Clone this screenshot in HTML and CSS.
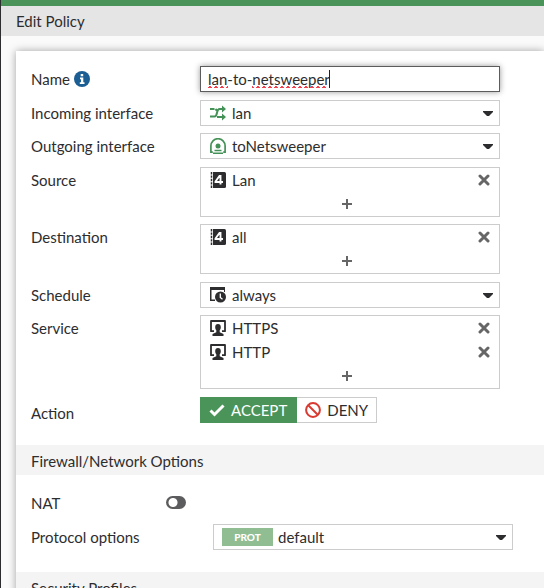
FILE: index.html
```html
<!DOCTYPE html>
<html lang="en">
<head>
<meta charset="utf-8">
<title>Edit Policy</title>
<link rel="stylesheet" href="styles.css">
</head>
<body>
<svg class="sprite" aria-hidden="true">
  <defs>
    <pattern id="squiggle" width="6" height="3" patternUnits="userSpaceOnUse">
      <path d="M0 2h4v1H0zM1 1h2v1H1z" fill="#f0424f"/>
    </pattern>
    <symbol id="i-address" viewBox="0 0 16 16">
      <path d="M3 0h11.500a1.500 1.500 0 0 1 1.500 1.500v13a1.500 1.500 0 0 1-1.500 1.500H3z" fill="#2d2d2f"/>
      <path d="M1.500 0v16" stroke="#2d2d2f" stroke-width="1.500" stroke-dasharray="2.400 1"/>
      <path d="M10.500 12.500V4h-1L5.500 9.500v.5H13" fill="none" stroke="#fff" stroke-width="1.900"/>
    </symbol>
    <symbol id="i-service" viewBox="0 0 16 16">
      <path d="M4 11.200H1V1h14v10.200h-3" fill="none" stroke="#2d2d2f" stroke-width="1.800" stroke-linejoin="round"/>
      <path d="M5.200 7.300C5.200 5 6.200 4 8 4s2.800 1 2.800 3.300c0 1.400-.5 2.400-1.100 3V12.300l3.800 1.700v2h-11v-2l3.800-1.700v-2c-.6-.6-1.100-1.600-1.100-3z" fill="#2d2d2f"/>
    </symbol>
    <symbol id="i-remove" viewBox="0 0 12 12">
      <path d="M2 2l8 8M10 2l-8 8" stroke="#666" stroke-width="3" stroke-linecap="round"/>
    </symbol>
    <symbol id="i-add" viewBox="0 0 12 12">
      <path d="M6 1v10M1 6h10" stroke="#666" stroke-width="2"/>
    </symbol>
    <symbol id="i-caret" viewBox="0 0 10 6">
      <path d="M0 0h10v1L6 5H4L0 1z" fill="#2d2d2f"/>
    </symbol>
  </defs>
</svg>
<header class="topbar"><h1>Edit Policy</h1></header>
<main class="content">
  <form class="card">
    <section class="fields">
      <div class="group">
        <div class="row">
          <label class="label" for="name">Name
            <svg class="icon info" viewBox="0 0 16 16" aria-hidden="true"><circle cx="8" cy="8" r="8" fill="#1b5e93"/><path d="M6.700 3h2.500v2.200H6.700zM6 6.500h3.300v4.700H10.500V13H5.800v-1.800H7V8.200H6z" fill="#fff"/></svg>
          </label>
          <div class="control">
            <input class="box name" id="name" type="text" value="lan-to-netsweeper" spellcheck="false" autocomplete="off">
            <svg class="marks" width="124" height="20" aria-hidden="true"><path d="M0 15h20v3H0zM44 15h76v3H44z" fill="url(#squiggle)"/><path d="M121 0h1v18h-1z" fill="#222"/></svg>
          </div>
        </div>
      </div>
      <div class="group">
        <div class="row">
          <label class="label" for="incoming">Incoming interface</label>
          <div class="control">
            <select class="box" id="incoming"><option>lan</option></select>
            <svg class="icon lead" viewBox="0 0 16 16" aria-hidden="true"><path d="M0 4h4.500M7 12h6M0 11.500h4.500c3.500 0 1.500-7.500 5-7.500H13M5.500 4l1.300 1.500M7 12l1.500 0" fill="none" stroke="#459258" stroke-width="2"/><path d="M12 .5L16 4l-4 3.500zM12 8.500l4 3.500-4 3.500z" fill="#459258"/></svg>
            <svg class="caret" aria-hidden="true"><use href="#i-caret"/></svg>
          </div>
        </div>
        <div class="row">
          <label class="label" for="outgoing">Outgoing interface</label>
          <div class="control">
            <select class="box" id="outgoing"><option>toNetsweeper</option></select>
            <svg class="icon lead" viewBox="0 0 16 16" aria-hidden="true"><path d="M2.800 14.200H.9V7.800a7.100 7.100 0 0 1 14.200 0v6.400h-1.900" fill="none" stroke="#459258" stroke-width="1.700"/><circle cx="8" cy="8" r="2.500" fill="#459258"/><path d="M4.500 12.500h7M3 15.300h10" stroke="#459258" stroke-width="1.400"/></svg>
            <svg class="caret" aria-hidden="true"><use href="#i-caret"/></svg>
          </div>
        </div>
      </div>
      <div class="group">
        <div class="row">
          <span class="label" id="source">Source</span>
          <div class="control list" role="group" aria-labelledby="source">
            <div class="item"><svg class="icon" aria-hidden="true"><use href="#i-address"/></svg><span>Lan</span><button type="button" class="plain" aria-label="Remove"><svg aria-hidden="true"><use href="#i-remove"/></svg></button></div>
            <button type="button" class="plain add" aria-label="Add"><svg aria-hidden="true"><use href="#i-add"/></svg></button>
          </div>
        </div>
        <div class="row">
          <span class="label" id="destination">Destination</span>
          <div class="control list" role="group" aria-labelledby="destination">
            <div class="item"><svg class="icon" aria-hidden="true"><use href="#i-address"/></svg><span>all</span><button type="button" class="plain" aria-label="Remove"><svg aria-hidden="true"><use href="#i-remove"/></svg></button></div>
            <button type="button" class="plain add" aria-label="Add"><svg aria-hidden="true"><use href="#i-add"/></svg></button>
          </div>
        </div>
      </div>
      <div class="group">
        <div class="row">
          <label class="label" for="schedule">Schedule</label>
          <div class="control">
            <select class="box" id="schedule"><option>always</option></select>
            <svg class="icon lead" viewBox="0 0 16 16" aria-hidden="true"><path d="M0 0h15v5h-1V3H1.500v9.500H5V14H0z" fill="#2d2d2f"/><circle cx="10.500" cy="10" r="5.500" fill="#2d2d2f"/><path d="M10.300 6.500v4l2.200 1.700" fill="none" stroke="#fff" stroke-width="1.300"/></svg>
            <svg class="caret" aria-hidden="true"><use href="#i-caret"/></svg>
          </div>
        </div>
        <div class="row">
          <span class="label" id="service">Service</span>
          <div class="control list" role="group" aria-labelledby="service">
            <div class="item"><svg class="icon" aria-hidden="true"><use href="#i-service"/></svg><span>HTTPS</span><button type="button" class="plain" aria-label="Remove"><svg aria-hidden="true"><use href="#i-remove"/></svg></button></div>
            <div class="item"><svg class="icon" aria-hidden="true"><use href="#i-service"/></svg><span>HTTP</span><button type="button" class="plain" aria-label="Remove"><svg aria-hidden="true"><use href="#i-remove"/></svg></button></div>
            <button type="button" class="plain add" aria-label="Add"><svg aria-hidden="true"><use href="#i-add"/></svg></button>
          </div>
        </div>
      </div>
      <div class="group">
        <div class="row">
          <span class="label tall" id="action">Action</span>
          <div class="control actions" role="group" aria-labelledby="action">
            <button type="button" class="choice accept" aria-pressed="true"><svg class="icon" viewBox="0 0 16 16" aria-hidden="true"><path d="M1.500 8.500l4 4 9-9" fill="none" stroke="#fff" stroke-width="3"/></svg>ACCEPT</button>
            <button type="button" class="choice deny" aria-pressed="false"><svg class="icon" viewBox="0 0 16 16" aria-hidden="true"><circle cx="8" cy="8" r="6.900" fill="none" stroke="#d93a31" stroke-width="2"/><path d="M3 3l10 10" stroke="#d93a31" stroke-width="2"/></svg>DENY</button>
          </div>
        </div>
      </div>
    </section>
    <h2 class="section-title">Firewall/Network Options</h2>
    <section class="fields">
      <div class="row narrow">
        <label class="label" for="nat">NAT</label>
        <input class="toggle" id="nat" type="checkbox" role="switch">
      </div>
      <div class="row narrow">
        <label class="label" for="protocol">Protocol options</label>
        <div class="control third">
          <select class="box tagged" id="protocol"><option>default</option></select>
          <span class="tag">PROT</span>
          <svg class="caret" aria-hidden="true"><use href="#i-caret"/></svg>
        </div>
      </div>
    </section>
    <h2 class="section-title">Security Profiles</h2>
  </form>
</main>
</body>
</html>
```

FILE: styles.css
```css
* {
  box-sizing: border-box;
}

body {
  margin: 0;
  height: 100vh;
  overflow: hidden;
  display: flex;
  flex-direction: column;
  border-left: 1px solid #2d2d2f;
  background: #fafafa;
  color: #2d2d2f;
  font: 15px/24px Lato, sans-serif;
}

button,
input,
select {
  margin: 0;
  color: inherit;
  font: inherit;
}

h1,
h2 {
  margin: 0;
  font-size: 15px;
  font-weight: 400;
  line-height: 30px;
}

.sprite {
  position: absolute;
  width: 0;
  height: 0;
}

.topbar {
  flex: none;
  border-top: 6px solid #4a9359;
  padding: 0 15px;
  background: #e5e5e5;
}

.content {
  flex: 1;
  min-height: 0;
  overflow: hidden;
  padding: 15px 0 0 15px;
}

.card {
  background: #fff;
  box-shadow: 0 0 8px rgba(0, 0, 0, 0.35);
}

.fields {
  display: flex;
  flex-direction: column;
  gap: 8px;
  padding: 15px 15px 16px;
}

.group {
  display: flex;
  flex-direction: column;
  gap: 7px;
}

.row {
  display: grid;
  grid-template-columns: 169px minmax(0, 300px);
  align-items: start;
}

.narrow {
  grid-template-columns: 135px 47px minmax(0, 300px);
}

.narrow:last-child {
  padding-bottom: 6px;
}

.third {
  grid-column: 3;
}

.label {
  display: flex;
  align-items: center;
  gap: 4px;
  line-height: 26px;
}

.tall {
  line-height: 32px;
}

.icon {
  flex: none;
  width: 16px;
  height: 16px;
}

.control {
  position: relative;
}

.box {
  display: block;
  width: 100%;
  height: 26px;
  padding: 0 30px 0 31px;
  border: 1px solid #ccc;
  border-radius: 0;
  background: #fff;
  appearance: none;
  outline: none;
}

.name {
  padding: 0 7px;
  border-color: #5c5c5e;
  box-shadow: 0 0 6px rgba(0, 0, 0, 0.4);
}

.tagged {
  padding-left: 64px;
}

.marks {
  position: absolute;
  top: 4px;
  left: 8px;
  pointer-events: none;
}

.lead {
  position: absolute;
  top: 5px;
  left: 10px;
  pointer-events: none;
}

.caret {
  position: absolute;
  top: 11px;
  right: 7px;
  width: 10px;
  height: 6px;
  pointer-events: none;
}

.tag {
  position: absolute;
  top: 4px;
  left: 9px;
  width: 51px;
  background: #90bd92;
  color: #fff;
  font-size: 10px;
  font-weight: 900;
  line-height: 18px;
  text-align: center;
  pointer-events: none;
}

.list {
  display: flex;
  flex-direction: column;
  border: 1px solid #ccc;
}

.item {
  display: flex;
  align-items: center;
  gap: 6px;
  padding: 0 9px;
}

.item span {
  flex: 1;
}

.plain {
  display: flex;
  align-items: center;
  justify-content: center;
  height: 24px;
  padding: 0;
  border: 0;
  background: none;
}

.plain svg {
  width: 12px;
  height: 12px;
}

.add {
  align-self: center;
  padding-right: 6px;
}

.actions {
  display: flex;
}

.choice {
  display: flex;
  align-items: center;
  gap: 6px;
  height: 26px;
  padding: 0 8px;
  border: 1px solid #ccc;
  background: #fff;
}

.accept {
  padding-right: 9px;
  border-color: #4a9359;
  background: #4a9359;
  color: #fff;
}

.deny {
  border-left: 0;
}

.section-title {
  padding: 2px 15px 0;
  background: #f4f4f4;
  line-height: 28px;
}

.toggle {
  appearance: none;
  width: 20px;
  height: 13px;
  margin-top: 6px;
  border-radius: 7px;
  background: radial-gradient(circle at 7px 50%, #fff 4px, #5c5c5e 5px);
}
```
